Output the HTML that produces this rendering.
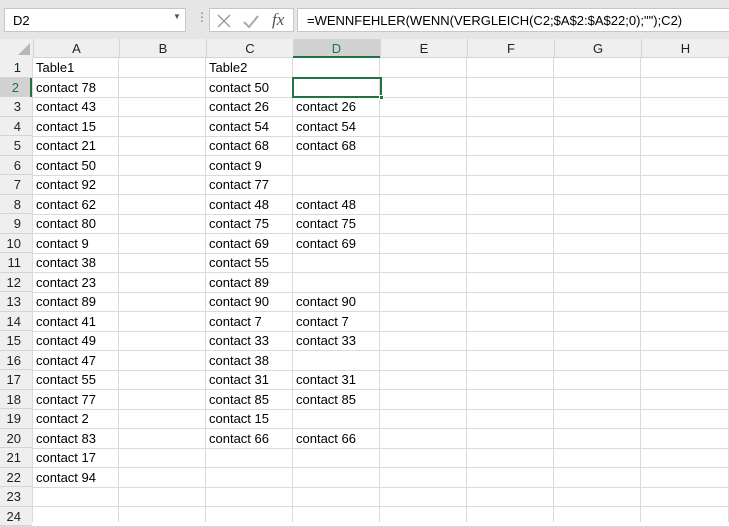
<!DOCTYPE html>
<html><head><meta charset="utf-8"><style>
*{margin:0;padding:0;box-sizing:border-box}
body{width:729px;height:522px;overflow:hidden;background:#fff;font-family:"Liberation Sans",sans-serif;font-size:13px;color:#000;position:relative}
.top{position:absolute;left:0;top:0;width:729px;height:39px;background:#e6e6e6}
.box{position:absolute;background:#fff;border:1px solid #c6c6c6}
.abs{position:absolute}
.hdr{position:absolute;background:#efefef;color:#222;text-align:center;font-size:13px}
.c{position:absolute;white-space:nowrap;overflow:hidden;padding-left:3px;line-height:19px}
.vl{position:absolute;width:1px;background:#dadada}
.hl{position:absolute;height:1px;background:#dadada}
</style></head><body>
<div class="top"></div>
<div class="box" style="left:4px;top:8px;width:182px;height:24px"><span class="abs" style="left:8px;top:4px">D2</span><span class="abs" style="left:168px;top:3px;font-size:8px;color:#555">▼</span></div>
<span class="abs" style="left:196px;top:10px;color:#777;font-size:12px">⋮</span>
<div class="box" style="left:209px;top:8px;width:85px;height:24px">
<svg class="abs" style="left:6px;top:4px" width="16" height="16"><path d="M2 2L14 14M14 2L2 14" stroke="#999" stroke-width="1.4"/></svg>
<svg class="abs" style="left:32px;top:4px" width="18" height="16"><path d="M2 9L7 14L16 3" stroke="#aaa" stroke-width="2" fill="none"/></svg>
<span class="abs" style="left:62px;top:1px;font-family:'Liberation Serif',serif;font-style:italic;font-size:17px;color:#555">fx</span>
</div>
<div class="box" style="left:297px;top:8px;width:436px;height:24px"><span class="abs" style="left:9px;top:4px">=WENNFEHLER(WENN(VERGLEICH(C2;$A$2:$A$22;0);"");C2)</span></div>
<div id="g"></div>
<script>
var g=document.getElementById('g'),h='';
var cx=[33,119,206,293,380,467,554,641,729];
var cols='ABCDEFGH';
var top0=58,rh=19.5;
h+='<div class="hdr" style="left:0;top:39px;width:33px;height:19px"></div>';
h+='<svg class="abs" style="left:18px;top:43px" width="12" height="12"><path d="M12 0L12 12L0 12Z" fill="#b8b8b8"/></svg>';
for(var i=0;i<8;i++){var sel=i==3;
h+='<div class="hdr" style="left:'+cx[i]+'px;top:39px;width:'+(cx[i+1]-cx[i])+'px;height:19px;line-height:19px;'+(sel?'background:#d2d2d2;color:#217346;border-bottom:2px solid #217346;':'border-left:1px solid #d4d4d4;border-bottom:1px solid #d4d4d4;')+'">'+cols[i]+'</div>';}
var A=[78,43,15,21,50,92,62,80,9,38,23,89,41,49,47,55,77,2,83,17,94];
var C=[50,26,54,68,9,77,48,75,69,55,89,90,7,33,38,31,85,15,66];
var D=[null,26,54,68,null,null,48,75,69,null,null,90,7,33,null,31,85,null,66];
for(var i=0;i<cx.length;i++)h+='<div class="vl" style="left:'+(cx[i]-1)+'px;top:58px;height:464px"></div>';
for(var r=0;r<24;r++){var t=top0+r*rh;
h+='<div class="hl" style="left:0;top:'+(t+rh-0.5)+'px;width:729px"></div>';
var s=r==1;
h+='<div class="hdr" style="left:0;top:'+t+'px;width:32px;height:'+rh+'px;line-height:19px;text-align:right;padding-right:11px;'+(s?'background:#d2d2d2;color:#217346;border-right:2px solid #217346;':'border-bottom:1px solid #d4d4d4;')+'">'+(r+1)+'</div>';
var a=r==0?'Table1':(A[r-1]!==undefined?'contact '+A[r-1]:'');
var c=r==0?'Table2':(C[r-1]!==undefined?'contact '+C[r-1]:'');
var d=r==0?'':(D[r-1]!=null?'contact '+D[r-1]:'');
if(a)h+='<div class="c" style="left:33px;top:'+t+'px;width:86px">'+a+'</div>';
if(c)h+='<div class="c" style="left:206px;top:'+t+'px;width:87px">'+c+'</div>';
if(d)h+='<div class="c" style="left:293px;top:'+t+'px;width:87px">'+d+'</div>';
}
h+='<div class="abs" style="left:292px;top:77px;width:90px;height:21px;border:2px solid #217346"></div>';
h+='<div class="abs" style="left:379px;top:95px;width:5px;height:5px;background:#217346;border:1px solid #fff"></div>';
g.innerHTML=h;
</script>
</body></html>
